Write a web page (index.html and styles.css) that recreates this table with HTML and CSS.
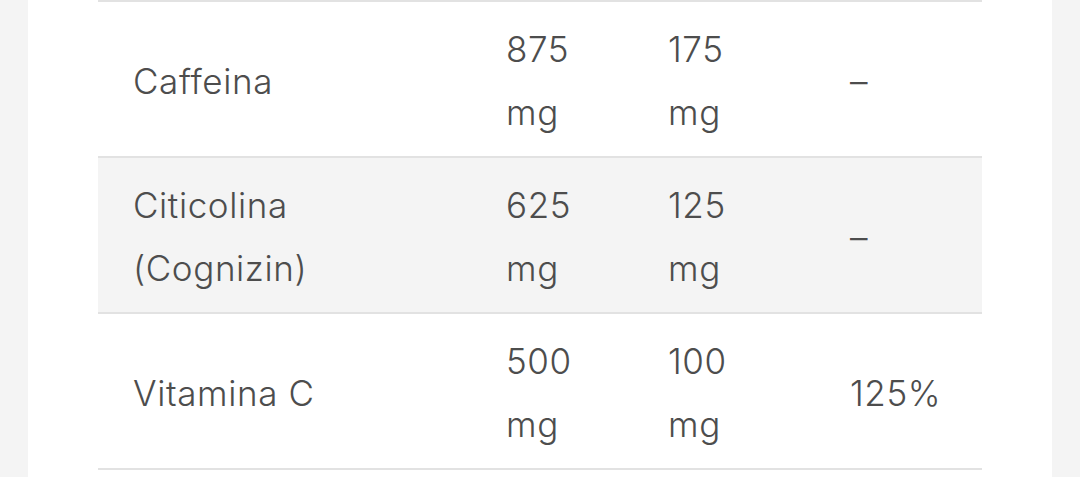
FILE: index.html
```html
<!DOCTYPE html>
<html lang="it">
<head>
<meta charset="utf-8">
<link rel="stylesheet" href="styles.css">
</head>
<body>
<div class="card">
  <table class="facts">
    <tbody>
      <tr>
        <td class="c-name">Caffeina</td>
        <td class="c-a">875 mg</td>
        <td class="c-b">175 mg</td>
        <td class="c-v">–</td>
      </tr>
      <tr class="alt">
        <td class="c-name">Citicolina (Cognizin)</td>
        <td class="c-a">625 mg</td>
        <td class="c-b">125 mg</td>
        <td class="c-v">–</td>
      </tr>
      <tr>
        <td class="c-name">Vitamina C</td>
        <td class="c-a">500 mg</td>
        <td class="c-b">100 mg</td>
        <td class="c-v">125%</td>
      </tr>
    </tbody>
  </table>
</div>
</body>
</html>
```

FILE: styles.css
```css
html, body {
  margin: 0;
  padding: 0;
  background: #f4f4f4;
}
body {
  height: 477px;
  overflow: hidden;
}
.card {
  margin: 0 28px;
  background: #ffffff;
  padding: 0 70px;
  height: 477px;
}
.facts {
  width: 884px;
  border-collapse: collapse;
  table-layout: fixed;
  font-family: "Inter", "Open Sans", sans-serif;
  font-size: 35px;
  font-weight: 350;
  letter-spacing: 0.6px;
  line-height: 63px;
  color: #4d4d4d;
}
.facts td {
  border-top: 2px solid #e2e2e2;
  border-bottom: 2px solid #e2e2e2;
  padding: 16px 20px 12px 35px;
  vertical-align: middle;
  height: 126px;
}
.facts .c-name { width: 318px; }
.facts .c-a { width: 87px; padding-right: 40px; }
.facts .c-b { width: 87px; padding-right: 60px; }
.facts .c-v { width: 112px; }
.facts tr.alt td {
  background: #f4f4f4;
}
```
